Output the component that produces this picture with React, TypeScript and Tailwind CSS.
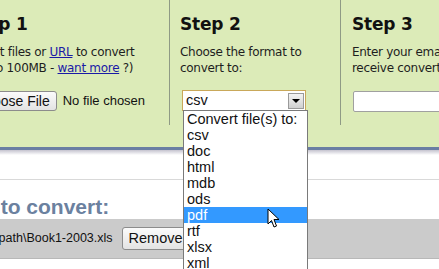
const body = { fontFamily: '"DejaVu Sans", Verdana, sans-serif' };
const arial = { fontFamily: '"Liberation Sans", Arial, sans-serif' };

const formats = ["csv", "doc", "html", "mdb", "ods", "pdf", "rtf", "xlsx", "xml"];

function Cursor() {
  return (
    <svg className="absolute left-[267px] top-[208px]" width="14" height="21" viewBox="0 0 14 21">
      <path d="M1 1 L1 16 L4.5 12.5 L7 19 L9.5 18 L7 11.5 L12 11.5 Z" fill="white" stroke="black" strokeWidth="1" strokeLinejoin="round" />
    </svg>
  );
}

export default function App() {
  return (
    <div className="relative w-[439px] h-[269px] overflow-hidden bg-white">
      {/* Steps panel */}
      <div className="h-[147px] bg-[#dcebb8] flex text-[#1e1e1e]" style={body}>
        <div className="-ml-[47px] w-[217px] flex-shrink-0 h-[125px] border-r border-[#8f9a85] pl-[16px] pt-[14px]">
          <h2 className="-ml-[2px] text-[17px] font-bold leading-[20px] tracking-[-0.2px] text-[#111]">Step 1</h2>
          <p className="mt-[10px] text-[12px] leading-[16px] tracking-[-0.3px] whitespace-nowrap">
            Select files or <span className="underline text-[#1a1aa6]">URL</span> to convert
            <br />
            (up to 100MB - <span className="underline text-[#1a1aa6]">want more</span> ?)
          </p>
          <div className="mt-[15px] -ml-[1px] flex items-center gap-[6px] whitespace-nowrap" style={arial}>
            <span className="h-[20px] px-[6px] flex items-center rounded-[3px] border border-[#8c8c8c] bg-gradient-to-b from-[#fbfbfb] to-[#e3e3e3] text-[14px] text-[#111]">Choose File</span>
            <span className="text-[13px] text-[#111]">No file chosen</span>
          </div>
        </div>
        <div className="w-[171px] flex-shrink-0 h-[125px] border-r border-[#8f9a85] pl-[10px] pt-[14px]">
          <h2 className="text-[17px] font-bold leading-[20px] tracking-[-0.2px] text-[#111]">Step 2</h2>
          <p className="mt-[10px] text-[12px] leading-[16px] tracking-[-0.3px]">
            Choose the format to
            <br />
            convert to:
          </p>
          <div className="mt-[14px] ml-[2px] w-[124px] h-[21px] border border-[#c9a85a] bg-white flex items-center justify-between pl-[3px] pr-[1px]" style={arial}>
            <span className="text-[14.5px] leading-none text-[#111]">csv</span>
            <span className="w-[16px] h-[16px] border border-[#9a9a9a] bg-gradient-to-b from-[#f4f4f4] to-[#d0d0d0] flex items-center justify-center">
              <span className="w-0 h-0 border-l-[4px] border-r-[4px] border-t-[4px] border-l-transparent border-r-transparent border-t-black" />
            </span>
          </div>
        </div>
        <div className="flex-1 pl-[11px] pt-[14px] whitespace-nowrap">
          <h2 className="text-[17px] font-bold leading-[20px] tracking-[-0.2px] text-[#111]">Step 3</h2>
          <p className="mt-[10px] text-[12px] leading-[16px] tracking-[-0.3px]">
            Enter your email address to
            <br />
            receive converted files:
          </p>
          <div className="mt-[15px] ml-[1px] w-[120px] h-[21px] border border-[#a0a0a0] rounded-[2px] bg-white" />
        </div>
      </div>
      <div className="h-[3px] bg-[#6a7ea3]" />
      <div className="h-[5px] bg-gradient-to-b from-[#c5c3cf] to-white" />

      {/* Files list */}
      <div className="mt-[24px] border-t border-[#d9d9d9]" />
      <h3 className="mt-[16px] -ml-[53px] text-[21px] font-bold leading-[22px] text-[#6b819f] whitespace-nowrap" style={arial}>
        Files to convert:
      </h3>
      <div className="mt-[1px] h-[40px] bg-[#cbcbcb] border-b border-[#b8b8b8] flex items-center -ml-[41px] gap-[9px] whitespace-nowrap" style={arial}>
        <span className="text-[12.5px] text-[#111]">C:\fakepath\Book1-2003.xls</span>
        <span className="h-[23px] px-[6px] flex items-center rounded-[3px] border border-[#8c8c8c] bg-gradient-to-b from-[#fbfbfb] to-[#e3e3e3] text-[14.5px] text-[#111]">Remove File</span>
      </div>

      {/* Open select dropdown */}
      <ul className="absolute left-[183px] top-[110px] w-[125px] bg-white border border-[#7a7a7a] text-[14.5px] leading-[16px] text-[#111]" style={arial}>
        <li className="pl-[3px]">Convert file(s) to:</li>
        {formats.map((f) => (
          <li key={f} className={f === "pdf" ? "pl-[3px] bg-[#3399ff] text-white" : "pl-[3px]"}>{f}</li>
        ))}
      </ul>
      <Cursor />
    </div>
  );
}
